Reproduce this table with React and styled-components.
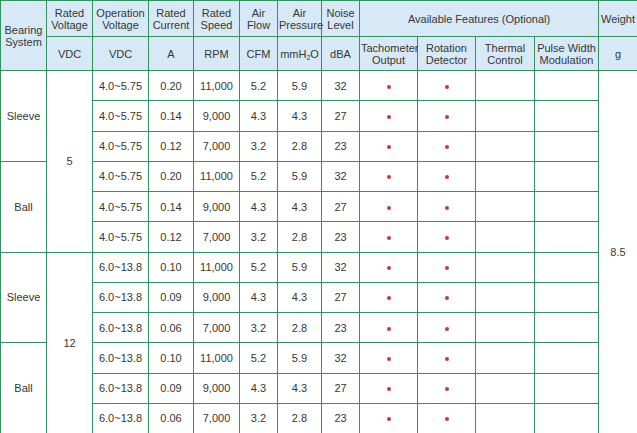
import React from "react";
import styled, { createGlobalStyle } from "styled-components";

const GlobalStyle = createGlobalStyle`
  html, body {
    margin: 0;
    padding: 0;
    background: #ffffff;
  }
  body {
    font-family: "Liberation Sans", Arial, sans-serif;
    overflow: hidden;
  }
`;

const widths = [46, 46, 56, 45, 46, 38, 44, 38, 58, 58, 59, 64, 39];

const groups = [
  {
    voltage: "5",
    op: "4.0~5.75",
    rows: [
      ["0.20", "11,000", "5.2", "5.9", "32"],
      ["0.14", "9,000", "4.3", "4.3", "27"],
      ["0.12", "7,000", "3.2", "2.8", "23"],
    ],
  },
  {
    voltage: "12",
    op: "6.0~13.8",
    rows: [
      ["0.10", "11,000", "5.2", "5.9", "32"],
      ["0.09", "9,000", "4.3", "4.3", "27"],
      ["0.06", "7,000", "3.2", "2.8", "23"],
    ],
  },
];

const App = () => {
  let first = true;
  const body = [];
  groups.forEach((group) => {
    ["Sleeve", "Ball"].forEach((bearing, bi) => {
      group.rows.forEach((row, ri) => {
        const cells = [];
        if (ri === 0) {
          cells.push(
            <Cell key="b" rowSpan={3}>
              {bearing}
            </Cell>
          );
          if (bi === 0) {
            cells.push(
              <Cell key="v" rowSpan={6}>
                {group.voltage}
              </Cell>
            );
          }
        }
        cells.push(<Cell key="op">{group.op}</Cell>);
        row.forEach((value, i) => cells.push(<Cell key={"d" + i}>{value}</Cell>));
        cells.push(
          <Cell key="t">
            <Dot />
          </Cell>
        );
        cells.push(
          <Cell key="r">
            <Dot />
          </Cell>
        );
        cells.push(<Cell key="th" />);
        cells.push(<Cell key="pw" />);
        if (first) {
          cells.push(
            <Cell key="w" rowSpan={12} $last>
              8.5
            </Cell>
          );
          first = false;
        }
        body.push(<BodyRow key={group.voltage + bearing + ri}>{cells}</BodyRow>);
      });
    });
  });

  return (
    <>
      <GlobalStyle />
      <Table>
        <colgroup>
          {widths.map((w, i) => (
            <col key={i} style={{ width: w }} />
          ))}
        </colgroup>
        <thead>
          <TopRow>
            <Head rowSpan={2}>
              Bearing
              <br />
              System
            </Head>
            <Head>
              Rated
              <br />
              Voltage
            </Head>
            <Head>
              Operation
              <br />
              Voltage
            </Head>
            <Head>
              Rated
              <br />
              Current
            </Head>
            <Head>
              Rated
              <br />
              Speed
            </Head>
            <Head>
              Air
              <br />
              Flow
            </Head>
            <Head>
              Air
              <br />
              Pressure
            </Head>
            <Head>
              Noise
              <br />
              Level
            </Head>
            <Head colSpan={4}>Available Features (Optional)</Head>
            <Head $last>Weight</Head>
          </TopRow>
          <UnitRow>
            <Head>VDC</Head>
            <Head>VDC</Head>
            <Head>A</Head>
            <Head>RPM</Head>
            <Head>CFM</Head>
            <Head>
              mmH<Sub>2</Sub>O
            </Head>
            <Head>dBA</Head>
            <Head>
              Tachometer
              <br />
              Output
            </Head>
            <Head>
              Rotation
              <br />
              Detector
            </Head>
            <Head>
              Thermal
              <br />
              Control
            </Head>
            <Head>
              Pulse Width
              <br />
              Modulation
            </Head>
            <Head $last>g</Head>
          </UnitRow>
        </thead>
        <tbody>{body}</tbody>
      </Table>
    </>
  );
};

const line = "#35905f";

const Table = styled.table`
  width: 637px;
  table-layout: fixed;
  border-collapse: collapse;
  border-spacing: 0;
  font-size: 11px;
  color: #363636;
`;

const TopRow = styled.tr`
  height: 36px;
`;

const UnitRow = styled.tr`
  height: 34px;
`;

const BodyRow = styled.tr`
  height: 30.25px;
`;

const Head = styled.th`
  background: #d7e9f6;
  border: 1px solid ${line};
  border-right-color: ${(p) => (p.$last ? "#d9ece2" : line)};
  font-weight: normal;
  line-height: 12px;
  padding: 0 1px;
  text-align: center;
  vertical-align: middle;
  white-space: nowrap;
`;

const Cell = styled.td`
  border: 1px solid ${line};
  border-right-color: ${(p) => (p.$last ? "#d9ece2" : line)};
  padding: 0;
  text-align: center;
  vertical-align: middle;
  white-space: nowrap;
`;

const Sub = styled.sub`
  font-size: 7px;
  vertical-align: -2px;
  line-height: 0;
`;

const Dot = styled.span`
  display: inline-block;
  width: 4px;
  height: 4px;
  border-radius: 50%;
  background: #c8383c;
  vertical-align: middle;
`;

export default App;
